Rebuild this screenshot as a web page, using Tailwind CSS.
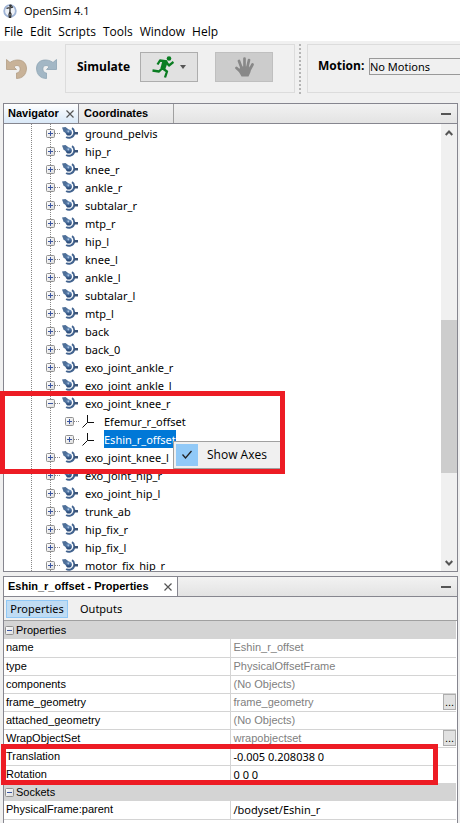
<!DOCTYPE html>
<html lang="en">
<head>
<meta charset="utf-8">
<meta name="viewport" content="width=device-width, initial-scale=1">
<title>OpenSim 4.1</title>
<script src="https://cdn.jsdelivr.net/npm/@tailwindcss/browser@4"></script>
</head>
<body class="relative flex h-screen flex-col overflow-hidden bg-[#f0f0f0] font-['Noto_Sans',sans-serif] text-[11px] text-black">

<svg class="absolute size-0" aria-hidden="true">
  <defs>
    <linearGradient id="steel" x1="0" y1="0" x2="0" y2="1"><stop offset="0" stop-color="#6d94c2"/><stop offset="1" stop-color="#1f3f6e"/></linearGradient>
    <linearGradient id="box" x1="0" y1="0" x2="1" y2="1"><stop offset="0" stop-color="#fff"/><stop offset="1" stop-color="#dcdcdc"/></linearGradient>
    <symbol id="plus" viewBox="0 0 9 9"><rect x=".5" y=".5" width="8" height="8" rx="1" fill="url(#box)" stroke="#919191"/><path d="M2 4.5h5M4.500 2v5" stroke="#3a55a0"/></symbol>
    <symbol id="minus" viewBox="0 0 9 9"><rect x=".5" y=".5" width="8" height="8" rx="1" fill="url(#box)" stroke="#919191"/><path d="M2 4.500h5" stroke="#3a55a0"/></symbol>
    <symbol id="joint" viewBox="0 0 16 12">
      <path d="M0 0.500 3.500 0 8 3.500 5.500 7.500 1.500 4.500Z" fill="#4f7099"/>
      <path d="M10 1.200C13.200 3 13.200 9.400 8.500 10.600 6.800 11 5 10.600 4.200 9.800" fill="none" stroke="#42638f" stroke-width="1.900"/>
      <path d="M12 5h4v2.500h-4z" fill="#3b5478"/>
      <circle cx="6.800" cy="5.500" r="3.100" fill="url(#steel)"/>
      <circle cx="6.300" cy="4.500" r=".9" fill="#a9c2df"/>
    </symbol>
    <symbol id="axes" viewBox="0 0 13 13"><path d="M5.500 0v7.500H12M5.500 7.500 .5 12.500" fill="none" stroke="#111"/></symbol>
  </defs>
</svg>

<header class="bg-white font-['Open_Sans','Noto_Sans',sans-serif] text-xs">
  <div class="flex h-[22px] items-center gap-[7px] pl-[3px]">
    <svg class="size-[14px]" viewBox="0 0 14 14" aria-hidden="true">
      <circle cx="7" cy="7" r="5.800" fill="#eef2f8" stroke="#9fb4d6" stroke-width="1.800"/>
      <path d="M3.500 4.500C5 3.500 6 4 7 4c1 0 2-1 3-1M7 4v4l1 2-.5 4M7 7.500l-1 3 .5 3.500" fill="none" stroke="#333" stroke-width="1.300"/>
      <circle cx="7.500" cy="1.800" r="1.400" fill="#333"/>
    </svg>
    <h1 class="text-[11px]">OpenSim 4.1</h1>
  </div>
  <nav class="flex h-[19px] items-center gap-[7px] pl-1">
    <button>File</button><button>Edit</button><button>Scripts</button><button>Tools</button><button>Window</button><button>Help</button>
  </nav>
</header>

<div class="flex h-[62px] shrink-0 items-start pt-[3px]">
  <div class="flex h-[49px] w-[65px] shrink-0 items-center gap-[9px] pl-[6px]">
    <button aria-label="Undo"><svg class="h-5 w-[21px]" viewBox="0 0 21 20"><path d="M.5.500 4 3.500C9-.5 20-.5 20.500 9 20.500 16 16 19.500 10.500 19.500V14C15 14 15.500 6.500 11 6.500 9.500 6.500 9 7 8 8L10.500 10.500H.5Z" fill="#c8b298" stroke="#b39d84" stroke-width=".8"/></svg></button>
    <button aria-label="Redo"><svg class="h-5 w-[21px]" viewBox="0 0 21 20"><path d="M20.500.500 17 3.500C12-.5 1-.5.5 9 .5 16 5 19.500 10.500 19.500V14C6 14 5.500 6.500 10 6.500 11.500 6.500 12 7 13 8L10.500 10.500H20.500Z" fill="#a3b7c5" stroke="#8ea4b4" stroke-width=".8"/></svg></button>
  </div>
  <section class="flex h-[49px] w-[230px] shrink-0 items-center border border-[#dcdcdc] pb-[3px] pl-[11px]">
    <span class="w-[63px] font-['Open_Sans',sans-serif] text-xs font-bold">Simulate</span>
    <button aria-label="Run" class="flex h-[30px] w-[58px] items-center justify-center gap-[6px] border border-[#adadad] bg-[#e1e1e1]">
      <svg class="size-[22px]" viewBox="0 0 22 22" aria-hidden="true"><circle cx="17" cy="2.500" r="2.300" fill="#0a7d22"/><path d="M15 5.500 8 4.500 5.500 8.500M13.500 6 10 12 15 15.500 13 21.500M10 12.500 7 15.500.5 14.500M14.500 6.500 17 9.500 21.500 6" fill="none" stroke="#0a7d22" stroke-width="2.300" stroke-linejoin="round"/><path d="m10.500 4.500 5.500 1-3 8.500-4.500-2Z" fill="#0a7d22"/></svg>
      <svg class="h-[4px] w-[6px]" viewBox="0 0 6 4" aria-hidden="true"><path d="M0 0h6L3 4Z" fill="#555"/></svg>
    </button>
    <button aria-label="Stop" class="ml-[17px] flex h-[30px] w-[58px] items-center justify-center border border-[#bfbfbf] bg-[#ccc]">
      <svg class="h-5 w-[19px]" viewBox="0 0 19 20" aria-hidden="true"><path d="M1.500 11 6 15M4 4l3 8M9.500 1.500V12M14 3l-2 9M17.500 7.500 14 14" fill="none" stroke="#888" stroke-width="2.700" stroke-linecap="round"/><path d="M5.500 9.500h9l1 5.500-2 4.500H6.500L3.500 14Z" fill="#888"/></svg>
    </button>
  </section>
  <div class="ml-[4px] h-[50px] w-[2px] shrink-0 bg-[repeating-linear-gradient(to_bottom,#b4b4b4_0_2px,transparent_2px_4px)]"></div>
  <section class="ml-[6px] flex h-[49px] flex-1 items-center overflow-hidden border border-r-0 border-[#dcdcdc] pb-[5px] pl-[10px]">
    <label for="motion" class="w-[51px] shrink-0 font-['Open_Sans',sans-serif] text-xs font-bold">Motion:</label>
    <select id="motion" class="h-[17px] w-40 shrink-0 appearance-none border border-[#999] bg-[#f0f0f0] text-[11px] leading-none"><option>No Motions</option></select>
  </section>
</div>

<section class="relative mr-[2px] ml-[3px] border border-[#86868f]">
  <div class="flex h-5 items-stretch border-b border-[#86868f] bg-linear-to-b from-[#f2f2f2] to-[#e3e3e3] font-['Liberation_Sans',sans-serif] text-[11px] font-bold">
    <div class="flex w-[75px] items-center justify-between border-r border-[#86868f] bg-linear-to-b from-white to-[#d9e8f7] pr-1 pl-1"><button>Navigator</button><button aria-label="Close Navigator"><svg class="size-2" viewBox="0 0 8 8"><path d="m.5.500 7 7M7.500.500l-7 7" stroke="#555" stroke-width="1.200"/></svg></button></div>
    <div class="flex w-[95px] items-center border-r border-[#a0a0a0] pl-[5px]"><button>Coordinates</button></div>
    <button aria-label="Minimize" class="ml-auto mr-[6px] flex w-[10px] items-center"><span class="h-[2px] w-full bg-[#555]"></span></button>
  </div>
  <div class="flex h-[447px] overflow-hidden bg-white">
    <ul class="relative flex-1 text-[11px] leading-none before:absolute before:top-0 before:left-[27px] before:h-full before:border-l before:border-dotted before:border-[#888] after:absolute after:top-0 after:left-[46px] after:h-full after:border-l after:border-dotted after:border-[#888] [&_li]:flex [&_li]:h-[18px] [&_li]:items-center [&_li]:pl-[42px] [&_svg]:relative [&_svg]:z-10 [&_svg]:shrink-0 [&_i]:mr-[2px] [&_i]:w-[5px] [&_i]:border-t [&_i]:border-dotted [&_i]:border-[#888] [&_span]:ml-[7px]">
      <li><svg class="size-[9px]"><use href="#plus"/></svg><i></i><svg class="h-3 w-4"><use href="#joint"/></svg><span>ground_pelvis</span></li>
      <li><svg class="size-[9px]"><use href="#plus"/></svg><i></i><svg class="h-3 w-4"><use href="#joint"/></svg><span>hip_r</span></li>
      <li><svg class="size-[9px]"><use href="#plus"/></svg><i></i><svg class="h-3 w-4"><use href="#joint"/></svg><span>knee_r</span></li>
      <li><svg class="size-[9px]"><use href="#plus"/></svg><i></i><svg class="h-3 w-4"><use href="#joint"/></svg><span>ankle_r</span></li>
      <li><svg class="size-[9px]"><use href="#plus"/></svg><i></i><svg class="h-3 w-4"><use href="#joint"/></svg><span>subtalar_r</span></li>
      <li><svg class="size-[9px]"><use href="#plus"/></svg><i></i><svg class="h-3 w-4"><use href="#joint"/></svg><span>mtp_r</span></li>
      <li><svg class="size-[9px]"><use href="#plus"/></svg><i></i><svg class="h-3 w-4"><use href="#joint"/></svg><span>hip_l</span></li>
      <li><svg class="size-[9px]"><use href="#plus"/></svg><i></i><svg class="h-3 w-4"><use href="#joint"/></svg><span>knee_l</span></li>
      <li><svg class="size-[9px]"><use href="#plus"/></svg><i></i><svg class="h-3 w-4"><use href="#joint"/></svg><span>ankle_l</span></li>
      <li><svg class="size-[9px]"><use href="#plus"/></svg><i></i><svg class="h-3 w-4"><use href="#joint"/></svg><span>subtalar_l</span></li>
      <li><svg class="size-[9px]"><use href="#plus"/></svg><i></i><svg class="h-3 w-4"><use href="#joint"/></svg><span>mtp_l</span></li>
      <li><svg class="size-[9px]"><use href="#plus"/></svg><i></i><svg class="h-3 w-4"><use href="#joint"/></svg><span>back</span></li>
      <li><svg class="size-[9px]"><use href="#plus"/></svg><i></i><svg class="h-3 w-4"><use href="#joint"/></svg><span>back_0</span></li>
      <li><svg class="size-[9px]"><use href="#plus"/></svg><i></i><svg class="h-3 w-4"><use href="#joint"/></svg><span>exo_joint_ankle_r</span></li>
      <li><svg class="size-[9px]"><use href="#plus"/></svg><i></i><svg class="h-3 w-4"><use href="#joint"/></svg><span>exo_joint_ankle_l</span></li>
      <li><svg class="size-[9px]"><use href="#minus"/></svg><i></i><svg class="h-3 w-4"><use href="#joint"/></svg><span>exo_joint_knee_r</span></li>
      <li><b class="w-[19px]"></b><svg class="size-[9px]"><use href="#plus"/></svg><i></i><b class="w-px"></b><svg class="size-[13px]"><use href="#axes"/></svg><b class="w-[2px]"></b><span>Efemur_r_offset</span></li>
      <li><b class="w-[19px]"></b><svg class="size-[9px]"><use href="#plus"/></svg><i></i><b class="w-px"></b><svg class="size-[13px]"><use href="#axes"/></svg><b class="w-[2px]"></b><span class="flex h-[18px] items-center bg-[#0078d7] text-white">Eshin_r_offset</span></li>
      <li><svg class="size-[9px]"><use href="#plus"/></svg><i></i><svg class="h-3 w-4"><use href="#joint"/></svg><span>exo_joint_knee_l</span></li>
      <li><svg class="size-[9px]"><use href="#plus"/></svg><i></i><svg class="h-3 w-4"><use href="#joint"/></svg><span>exo_joint_hip_r</span></li>
      <li><svg class="size-[9px]"><use href="#plus"/></svg><i></i><svg class="h-3 w-4"><use href="#joint"/></svg><span>exo_joint_hip_l</span></li>
      <li><svg class="size-[9px]"><use href="#plus"/></svg><i></i><svg class="h-3 w-4"><use href="#joint"/></svg><span>trunk_ab</span></li>
      <li><svg class="size-[9px]"><use href="#plus"/></svg><i></i><svg class="h-3 w-4"><use href="#joint"/></svg><span>hip_fix_r</span></li>
      <li><svg class="size-[9px]"><use href="#plus"/></svg><i></i><svg class="h-3 w-4"><use href="#joint"/></svg><span>hip_fix_l</span></li>
      <li><svg class="size-[9px]"><use href="#plus"/></svg><i></i><svg class="h-3 w-4"><use href="#joint"/></svg><span>motor_fix_hip_r</span></li>
    </ul>
    <div class="flex w-4 flex-col items-center bg-[#f0f0f0]">
      <svg class="mt-[6px] h-[6px] w-2" viewBox="0 0 8 6" aria-hidden="true"><path d="M.7 5 4 1.500 7.300 5" fill="none" stroke="#555" stroke-width="2"/></svg>
      <div class="mt-[184px] h-[153px] w-full bg-[#cdcdcd]"></div>
      <svg class="mt-auto mb-[5px] h-[6px] w-2" viewBox="0 0 8 6" aria-hidden="true"><path d="M.7 1 4 4.500 7.300 1" fill="none" stroke="#555" stroke-width="2"/></svg>
    </div>
  </div>
  <div role="menu" class="absolute top-[337px] left-[169px] z-20 flex h-7 w-[108px] items-center border border-[#a0a0a0] bg-[#f0f0f0] p-[2px] font-['Open_Sans',sans-serif] text-xs">
    <span class="flex size-[22px] items-center justify-center bg-[#91c9f7]"><svg class="size-3" viewBox="0 0 12 12" aria-hidden="true"><path d="m1.500 5.500 3 3.500 6-7" fill="none" stroke="#222" stroke-width="1.300"/></svg></span>
    <button role="menuitemcheckbox" aria-checked="true" class="ml-[9px] whitespace-nowrap">Show Axes</button>
  </div>
  <div class="pointer-events-none absolute top-[287px] -left-1 z-30 h-[83px] w-[285px] border-5 border-[#ed1c24]"></div>
</section>

<section class="relative mt-1 mr-[2px] ml-[3px] flex-1 border border-b-0 border-[#86868f] bg-white">
  <div class="flex h-5 items-stretch border-b border-[#86868f] bg-linear-to-b from-[#f2f2f2] to-[#e3e3e3] font-['Liberation_Sans',sans-serif] text-[11px] font-bold">
    <div class="flex w-[174px] items-center justify-between border-r border-[#86868f] bg-white pr-[5px] pl-1"><button class="whitespace-nowrap">Eshin_r_offset - Properties</button><button aria-label="Close Properties"><svg class="size-2" viewBox="0 0 8 8"><path d="m.5.500 7 7M7.500.500l-7 7" stroke="#555" stroke-width="1.200"/></svg></button></div>
    <button aria-label="Minimize" class="ml-auto mr-[6px] flex w-[10px] items-center"><span class="h-[2px] w-full bg-[#555]"></span></button>
  </div>
  <div class="flex h-6 items-center border-b border-[#a0a0a0] bg-[#f0f0f0] pl-[2px]">
    <button class="h-[18px] w-[62px] border border-[#90c8f6] bg-[#c0dcf3] leading-none">Properties</button>
    <button class="ml-3 leading-none">Outputs</button>
  </div>
  <div class="relative pr-px">
  <table class="w-full table-fixed border-collapse font-['Liberation_Sans',sans-serif] text-[11px] leading-none [&_td]:h-[18px] [&_td]:border-b [&_td]:border-[#d4d4d4] [&_td]:p-0 [&_td]:pl-[3px] [&_th]:h-[18px] [&_th]:bg-[#d4d4d4] [&_th]:p-0 [&_th]:pl-px [&_th]:text-left [&_th]:font-normal [&_td:first-child]:border-r [&_td:first-child]:pl-[2px]">
    <tbody>
      <tr><th colspan="2"><div class="flex items-center gap-[2px]"><svg class="size-[9px]"><use href="#minus"/></svg>Properties</div></th></tr>
      <tr><td>name</td><td class="text-[#808080]">Eshin_r_offset</td></tr>
      <tr><td>type</td><td class="text-[#808080]">PhysicalOffsetFrame</td></tr>
      <tr><td>components</td><td class="text-[#808080]">(No Objects)</td></tr>
      <tr><td>frame_geometry</td><td class="text-[#808080]"><div class="flex items-center justify-between">frame_geometry<button class="h-4 w-[13px] border border-[#adadad] bg-[#e1e1e1] text-black">...</button></div></td></tr>
      <tr><td>attached_geometry</td><td class="text-[#808080]">(No Objects)</td></tr>
      <tr><td>WrapObjectSet</td><td class="text-[#808080]"><div class="flex items-center justify-between">wrapobjectset<button class="h-4 w-[13px] border border-[#adadad] bg-[#e1e1e1] text-black">...</button></div></td></tr>
      <tr><td>Translation</td><td class="font-['Noto_Sans',sans-serif]">-0.005 0.208038 0</td></tr>
      <tr><td>Rotation</td><td class="font-['Noto_Sans',sans-serif]">0 0 0</td></tr>
      <tr><th colspan="2"><div class="flex items-center gap-[2px]"><svg class="size-[9px]"><use href="#minus"/></svg>Sockets</div></th></tr>
      <tr><td>PhysicalFrame:parent</td><td class="font-['Noto_Sans',sans-serif]">/bodyset/Eshin_r</td></tr>
    </tbody>
  </table>
  <div class="pointer-events-none absolute top-[123px] right-[19px] -left-[3px] h-[41px] border-5 border-[#ed1c24]"></div>
  </div>
</section>
</body>
</html>
